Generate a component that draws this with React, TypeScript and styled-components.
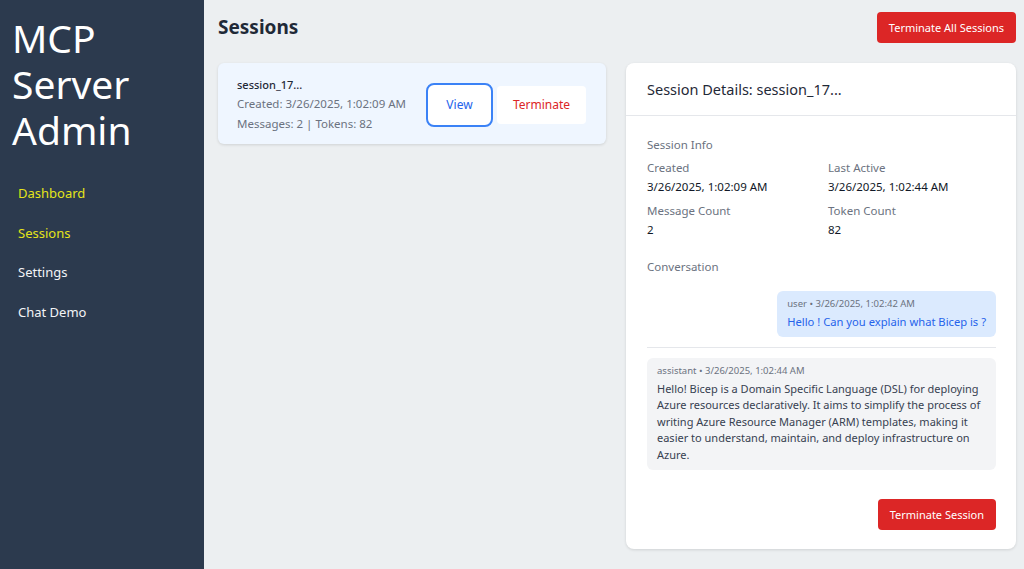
import styled, { createGlobalStyle } from 'styled-components'

const GlobalStyle = createGlobalStyle`
  html, body {
    margin: 0;
    padding: 0;
    height: 100%;
  }
  body {
    font-family: 'Noto Sans', 'Open Sans', sans-serif;
    background: #eceff1;
  }
  #root {
    height: 100%;
  }
  * {
    box-sizing: border-box;
  }
`

const Layout = styled.div`
  display: flex;
  width: 1024px;
  height: 569px;
  overflow: hidden;
`

const Sidebar = styled.aside`
  width: 204px;
  flex-shrink: 0;
  background: #2c3a4e;
  padding: 15px 12px 0 12px;
`

const Brand = styled.h1`
  margin: 0;
  color: #fff;
  font-weight: 400;
  font-size: 39px;
  line-height: 46px;
`

const Nav = styled.nav`
  display: flex;
  flex-direction: column;
  gap: 19.5px;
  margin-top: 30px;
  padding-left: 6px;
`

const NavLink = styled.a<{ $active?: boolean }>`
  color: ${(p) => (p.$active ? '#e4e41a' : '#f3f4f6')};
  font-size: 13px;
  line-height: 20px;
  text-decoration: none;
`

const Main = styled.main`
  flex: 1;
  padding: 12px 8px 20px 14px;
  display: flex;
  flex-direction: column;
`

const Header = styled.div`
  display: flex;
  justify-content: space-between;
  align-items: center;
  height: 30px;
`

const Title = styled.h2`
  margin: 0;
  font-size: 19px;
  font-weight: 700;
  color: #1f2937;
`

const DangerButton = styled.button`
  background: #dc2626;
  color: #fff;
  border: none;
  border-radius: 4px;
  font-family: inherit;
  font-size: 11px;
  padding: 0 12px;
  height: 31px;
  cursor: pointer;
`

const Columns = styled.div`
  display: grid;
  grid-template-columns: 388px 390px;
  gap: 20px;
  margin-top: 21px;
  align-items: start;
`

const SessionCard = styled.div`
  background: #eff6ff;
  border-radius: 6px;
  box-shadow: 0 1px 3px rgba(0, 0, 0, 0.12);
  padding: 14px 20px 12px 19px;
  display: flex;
  align-items: center;
  justify-content: space-between;
  height: 81px;
`

const SessionMeta = styled.div`
  display: flex;
  flex-direction: column;
  gap: 2px;
`

const SessionId = styled.div`
  font-size: 11px;
  font-weight: 500;
  color: #1f2937;
  line-height: 17px;
`

const MutedLine = styled.div`
  font-size: 11.5px;
  color: #6b7280;
  line-height: 18px;
`

const Actions = styled.div`
  display: flex;
  align-items: center;
  gap: 4px;
`

const ViewButton = styled.button`
  width: 67px;
  height: 44px;
  background: #fff;
  border: 2px solid #3b82f6;
  border-radius: 8px;
  color: #2563eb;
  font-family: inherit;
  font-size: 12px;
`

const GhostDanger = styled.button`
  width: 89px;
  height: 38px;
  background: #fff;
  border: none;
  border-radius: 4px;
  color: #dc2626;
  font-family: inherit;
  font-size: 12px;
`

const DetailsPanel = styled.section`
  background: #fff;
  border-radius: 8px;
  box-shadow: 0 1px 3px rgba(0, 0, 0, 0.12);
  height: 486px;
  display: flex;
  flex-direction: column;
`

const DetailsHeader = styled.div`
  height: 53px;
  border-bottom: 1px solid #e5e7eb;
  padding: 0 21px;
  display: flex;
  align-items: center;
  font-size: 14.5px;
  color: #1f2937;
`

const DetailsBody = styled.div`
  padding: 20px 20px 19px 21px;
  display: flex;
  flex-direction: column;
  flex: 1;
`

const SectionLabel = styled.div`
  font-size: 11.5px;
  color: #6b7280;
  line-height: 18px;
`

const InfoGrid = styled.div`
  display: grid;
  grid-template-columns: 181px 1fr;
  row-gap: 6px;
  margin-top: 5px;
  margin-bottom: 19px;
`

const InfoItem = styled.div`
  display: flex;
  flex-direction: column;
  gap: 1px;
`

const InfoValue = styled.div`
  font-size: 11.5px;
  color: #111827;
  line-height: 18px;
`

const Conversation = styled.div`
  display: flex;
  flex-direction: column;
  margin-top: 4px;
`

const Bubble = styled.div<{ $user?: boolean }>`
  align-self: ${(p) => (p.$user ? 'flex-end' : 'stretch')};
  background: ${(p) => (p.$user ? '#dbeafe' : '#f3f4f6')};
  border-radius: 6px;
  padding: 5px 10px 6px 10px;
  margin-top: ${(p) => (p.$user ? '11px' : '10px')};
`

const BubbleMeta = styled.div`
  font-size: 9.5px;
  color: #6b7280;
  line-height: 15px;
`

const BubbleText = styled.div<{ $user?: boolean }>`
  font-size: ${(p) => (p.$user ? '11.2px' : '11px')};
  line-height: 16.6px;
  margin-top: 3px;
  color: ${(p) => (p.$user ? '#2563eb' : '#374151')};
`

const Divider = styled.hr`
  border: none;
  border-top: 1px solid #e5e7eb;
  margin: 10px 0 0 0;
`

const Footer = styled.div`
  margin-top: auto;
  display: flex;
  justify-content: flex-end;
`

const App = () => {
  return (
    <>
      <GlobalStyle />
      <Layout>
        <Sidebar>
          <Brand>
            MCP
            <br />
            Server
            <br />
            Admin
          </Brand>
          <Nav>
            <NavLink $active>Dashboard</NavLink>
            <NavLink $active>Sessions</NavLink>
            <NavLink>Settings</NavLink>
            <NavLink>Chat Demo</NavLink>
          </Nav>
        </Sidebar>
        <Main>
          <Header>
            <Title>Sessions</Title>
            <DangerButton>Terminate All Sessions</DangerButton>
          </Header>
          <Columns>
            <SessionCard>
              <SessionMeta>
                <SessionId>session_17...</SessionId>
                <MutedLine>Created: 3/26/2025, 1:02:09 AM</MutedLine>
                <MutedLine>Messages: 2 | Tokens: 82</MutedLine>
              </SessionMeta>
              <Actions>
                <ViewButton>View</ViewButton>
                <GhostDanger>Terminate</GhostDanger>
              </Actions>
            </SessionCard>
            <DetailsPanel>
              <DetailsHeader>Session Details: session_17...</DetailsHeader>
              <DetailsBody>
                <SectionLabel>Session Info</SectionLabel>
                <InfoGrid>
                  <InfoItem>
                    <SectionLabel>Created</SectionLabel>
                    <InfoValue>3/26/2025, 1:02:09 AM</InfoValue>
                  </InfoItem>
                  <InfoItem>
                    <SectionLabel>Last Active</SectionLabel>
                    <InfoValue>3/26/2025, 1:02:44 AM</InfoValue>
                  </InfoItem>
                  <InfoItem>
                    <SectionLabel>Message Count</SectionLabel>
                    <InfoValue>2</InfoValue>
                  </InfoItem>
                  <InfoItem>
                    <SectionLabel>Token Count</SectionLabel>
                    <InfoValue>82</InfoValue>
                  </InfoItem>
                </InfoGrid>
                <SectionLabel>Conversation</SectionLabel>
                <Conversation>
                  <Bubble $user>
                    <BubbleMeta>user • 3/26/2025, 1:02:42 AM</BubbleMeta>
                    <BubbleText $user>Hello ! Can you explain what Bicep is ?</BubbleText>
                  </Bubble>
                  <Divider />
                  <Bubble>
                    <BubbleMeta>assistant • 3/26/2025, 1:02:44 AM</BubbleMeta>
                    <BubbleText>
                      Hello! Bicep is a Domain Specific Language (DSL) for deploying Azure resources
                      declaratively. It aims to simplify the process of writing Azure Resource Manager
                      (ARM) templates, making it easier to understand, maintain, and deploy
                      infrastructure on Azure.
                    </BubbleText>
                  </Bubble>
                </Conversation>
                <Footer>
                  <DangerButton>Terminate Session</DangerButton>
                </Footer>
              </DetailsBody>
            </DetailsPanel>
          </Columns>
        </Main>
      </Layout>
    </>
  )
}

export default App
